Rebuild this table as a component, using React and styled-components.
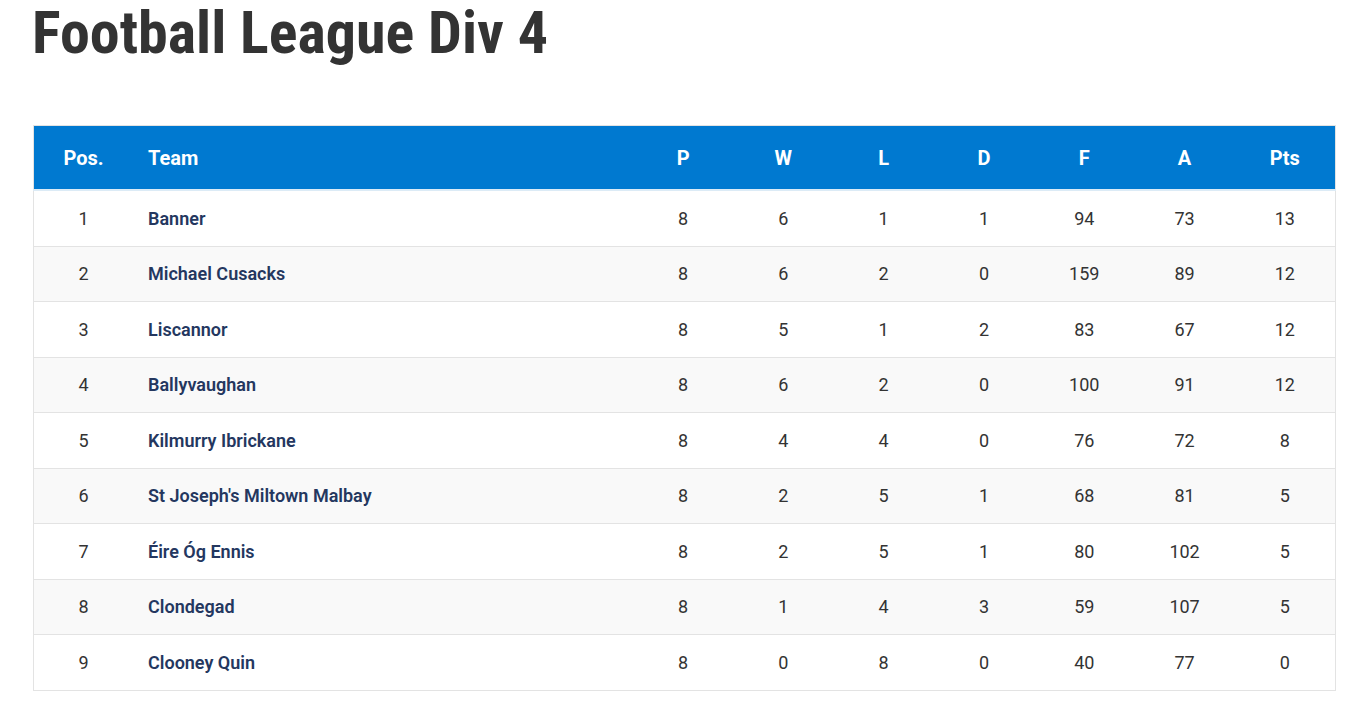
import styled, { createGlobalStyle } from "styled-components";

const GlobalStyle = createGlobalStyle`
  body {
    margin: 0;
    background: #fff;
    font-family: Roboto, "Liberation Sans", sans-serif;
    color: #333;
  }
`;

const Page = styled.div`
  padding: 0 21px 0 33px;
`;

const Title = styled.h1`
  margin: 0 0 0 -1px;
  padding-top: 1px;
  height: 125px;
  font-family: "Roboto Condensed", Roboto, sans-serif;
  font-stretch: 75%;
  font-size: 60px;
  font-weight: 700;
  line-height: 64px;
  color: #333;
  box-sizing: border-box;
`;

const Table = styled.table`
  width: 100%;
  border-collapse: collapse;
  border: 1px solid #e3e3e3;
`;

const HeadRow = styled.tr`
  background: #0079d0;
  border-bottom: 2px solid #dcebf6;
`;

const Th = styled.th`
  height: 63px;
  padding: 0;
  width: ${(p) => p.$w || "auto"};
  text-align: ${(p) => (p.$left ? "left" : "center")};
  padding-left: ${(p) => (p.$left ? "15px" : "0")};
  color: #fff;
  font-size: 20px;
  font-weight: 700;
`;

const Row = styled.tr`
  background: ${(p) => (p.$alt ? "#f9f9f9" : "#fff")};
  border-bottom: 1px solid #e3e3e3;
`;

const Td = styled.td`
  height: 54.5px;
  padding: 0;
  text-align: ${(p) => (p.$left ? "left" : "center")};
  padding-left: ${(p) => (p.$left ? "15px" : "0")};
  font-size: 18px;
  font-weight: ${(p) => (p.$left ? 600 : 400)};
  color: ${(p) => (p.$left ? "#24375f" : "#333")};
`;

const rows = [
  ["Banner", 8, 6, 1, 1, 94, 73, 13],
  ["Michael Cusacks", 8, 6, 2, 0, 159, 89, 12],
  ["Liscannor", 8, 5, 1, 2, 83, 67, 12],
  ["Ballyvaughan", 8, 6, 2, 0, 100, 91, 12],
  ["Kilmurry Ibrickane", 8, 4, 4, 0, 76, 72, 8],
  ["St Joseph's Miltown Malbay", 8, 2, 5, 1, 68, 81, 5],
  ["Éire Óg Ennis", 8, 2, 5, 1, 80, 102, 5],
  ["Clondegad", 8, 1, 4, 3, 59, 107, 5],
  ["Clooney Quin", 8, 0, 8, 0, 40, 77, 0],
];

const stats = ["P", "W", "L", "D", "F", "A", "Pts"];

const App = () => {
  return (
    <>
      <GlobalStyle />
      <Page>
        <Title>Football League Div 4</Title>
        <Table>
          <thead>
            <HeadRow>
              <Th $w="99px">Pos.</Th>
              <Th $left>Team</Th>
              {stats.map((s) => (
                <Th key={s} $w="100.3px">
                  {s}
                </Th>
              ))}
            </HeadRow>
          </thead>
          <tbody>
            {rows.map((r, i) => (
              <Row key={r[0]} $alt={i % 2 === 1}>
                <Td>{i + 1}</Td>
                <Td $left>{r[0]}</Td>
                {r.slice(1).map((v, j) => (
                  <Td key={j}>{v}</Td>
                ))}
              </Row>
            ))}
          </tbody>
        </Table>
      </Page>
    </>
  );
};

export default App;
